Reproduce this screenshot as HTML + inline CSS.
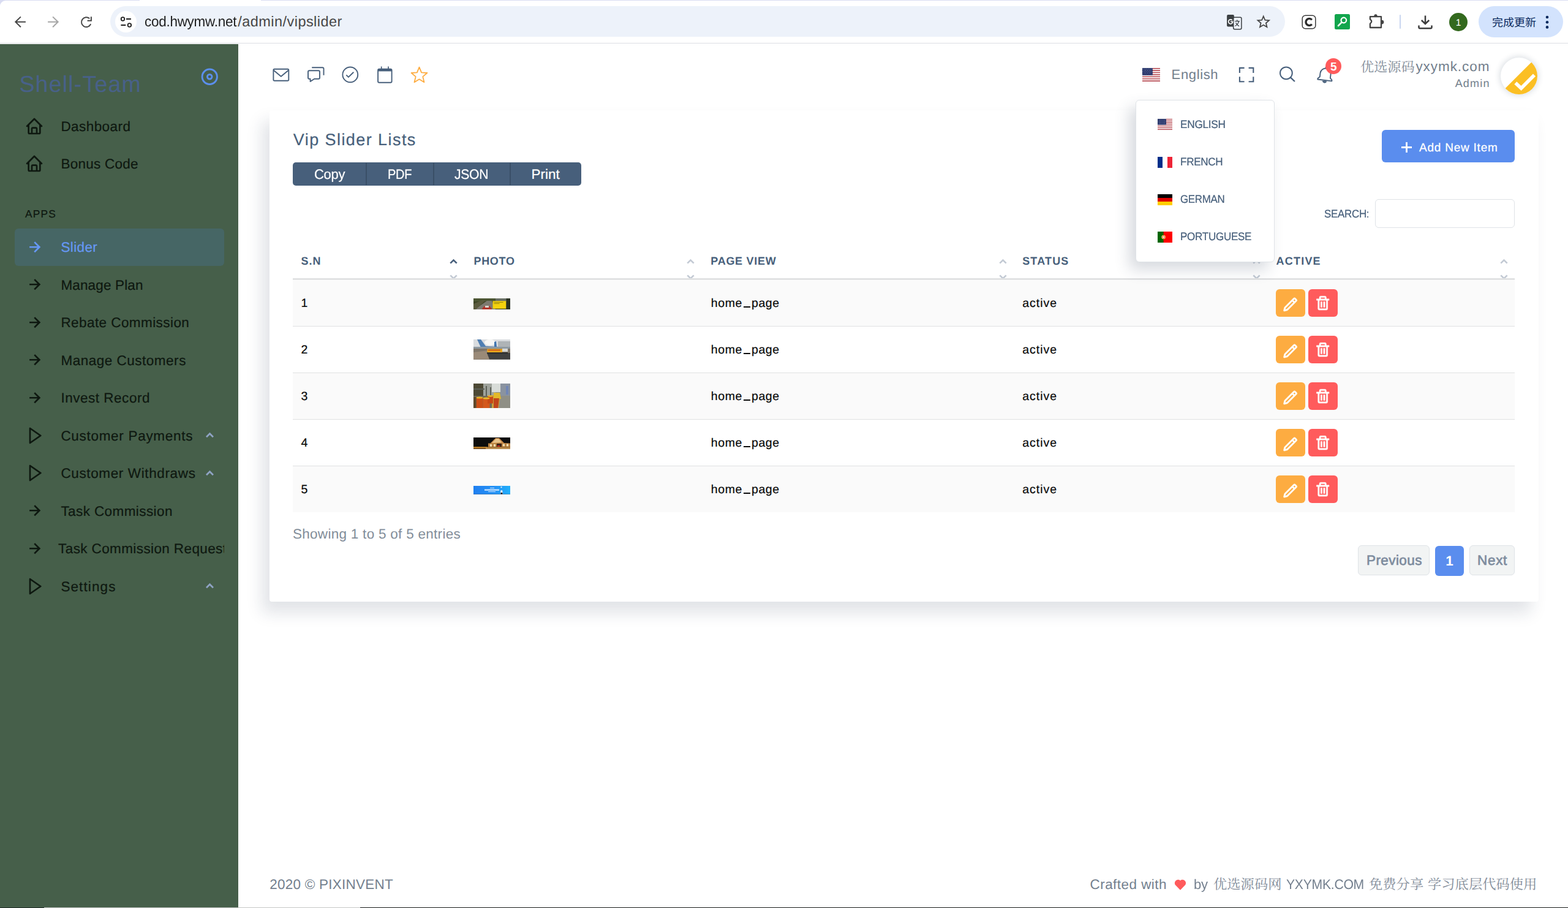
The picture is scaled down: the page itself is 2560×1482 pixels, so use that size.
<!DOCTYPE html>
<html lang="en"><head><meta charset="utf-8"><title>Vip Slider Lists</title>
<style>
html,body{margin:0;padding:0}
body{text-rendering:geometricPrecision;width:2560px;height:1482px;overflow:hidden;background:#fff;position:relative;font-family:"Liberation Sans",sans-serif}
#page div,#page svg,#page span{position:absolute}
#page{position:absolute;left:0;top:0;width:2560px;height:1482px;overflow:hidden}
#page>div{left:0;top:0}
.t{white-space:pre;line-height:1;transform-origin:0 50%;font-family:"Liberation Sans",sans-serif}
svg{display:block}
</style></head>
<body><div id="page">
<!-- browser chrome -->
<div id="chrome">
<div style="left:0px;top:0px;width:2560px;height:72px;background:#fff"></div>
<div style="left:0px;top:0px;width:228px;height:9px;background:#d9dcf2"></div>
<div style="left:0px;top:1px;width:229px;height:9px;background:#fff;border-radius:9px 0 0 0"></div>
<div style="left:426px;top:0px;width:2134px;height:1px;background:#d9dcf2"></div>
<div style="left:0px;top:70px;width:2560px;height:1px;background:#dcdee3"></div>
<svg style="left:16px;top:20px;" width="144" height="32" viewBox="16 20 144 32"><g style="fill:none;stroke:#474747;stroke-width:2"><path d="M41.9 35.8H25.3M33.9 27.4 25.3 35.8 33.9 44.2"/><path d="M78.1 35.8H94.7M86.1 27.4 94.7 35.8 86.1 44.2" stroke="#a6a6a6"/><path d="M146.2 30.3A7.9 7.9 0 1 0 148.2 39.2"/><path d="M148.9 27.2V33.7H142.6"/></g></svg>
<div style="left:180px;top:10px;width:1918px;height:50px;background:#edf2fa;border-radius:25px"></div>
<div style="left:187.5px;top:17.5px;width:35.5px;height:35.5px;background:#fff;border-radius:50%"></div>
<svg style="left:194px;top:24px;fill:none;stroke:#1f1f1f;stroke-width:1.8" width="24" height="24" viewBox="194 24 24 24"><circle cx="200.5" cy="31" r="2.8"/><path d="M206 31h7.9M197.4 41h7.9"/><circle cx="211.4" cy="41" r="2.8"/></svg>
<span class="t" style="left:236.3px;top:24px;font-size:23.5px;color:#1f1f1f;letter-spacing:-0.3px;transform:scaleX(0.958);">cod.hwymw.net</span>
<span class="t" style="left:388.3px;top:24px;font-size:23.5px;color:#474747;letter-spacing:0.45px;">/admin/vipslider</span>
<svg style="left:2000px;top:20px;" width="30" height="30" viewBox="2000 20 30 30"><rect x="2003.1" y="24" width="11.8" height="19.4" rx="1.9" fill="#3c4043"/><path d="M2012.5 43.3h5l-2.2 4.4z" fill="#3c4043"/><rect x="2013.7" y="28.3" width="13.2" height="19.4" rx="2.1" fill="#edf2fa" stroke="#3c4043" stroke-width="1.5"/><path d="M2011.7 33a3.5 3.5 0 1 0 .9 2.4h-3.5" fill="none" stroke="#fff" stroke-width="1.7"/><path d="M2016.2 34.7h7.6M2019.7 32.5v2.2M2022.7 34.9c-.9 3-3.1 5.7-6.2 7.6M2017.6 37c1.2 2.3 3 4.3 5.4 5.8" fill="none" stroke="#3c4043" stroke-width="1.3"/></svg>
<svg style="left:2049.3px;top:21.6px;fill:#474747;" width="27.5" height="27.5" viewBox="0 0 24 24"><path d="M22 9.24l-7.19-.62L12 2 9.19 8.63 2 9.24l5.46 4.73L5.82 21 12 17.27 18.18 21l-1.63-7.03L22 9.24zM12 15.4l-3.76 2.27 1-4.28-3.32-2.88 4.38-.38L12 6.1l1.71 4.04 4.38.38-3.32 2.88 1 4.28L12 15.4z"/></svg>
<svg style="left:2125px;top:23.5px;" width="24" height="24" viewBox="0 0 24 24"><rect x="1.2" y="1.2" width="21.6" height="21.6" rx="5" fill="#fff" stroke="#3b3b3b" stroke-width="1.5"/><path d="M16.8 8.3A5.6 5.6 0 1 0 16.8 15.7" fill="none" stroke="#2b2b2b" stroke-width="3.4"/></svg>
<svg style="left:2179px;top:23px;" width="25" height="25" viewBox="0 0 25 25"><rect width="25" height="25" rx="2.5" fill="#12a54d"/><circle cx="14.8" cy="10" r="4.3" fill="none" stroke="#fff" stroke-width="2.2"/><path d="M11.6 13.4 6 19" stroke="#fff" stroke-width="2.6" stroke-linecap="round"/></svg>
<svg style="left:2232px;top:20px;" width="30" height="30" viewBox="2232 20 30 30"><path d="M2236.9 27.2H2255V45H2236.9V38.6Q2241.6 35 2236.9 31.4Z" fill="none" stroke="#444" stroke-width="2.3" stroke-linejoin="round"/><path d="M2243.3 26.3a2.7 3.2 0 0 1 5.4 0zM2256 32.7a3.4 3.4 0 0 1 0 6.8z" fill="#444"/></svg>
<div style="left:2285px;top:24px;width:2px;height:23px;background:#c9d6f0;border-radius:1px"></div>
<svg style="left:2313px;top:22px;" width="28" height="28" viewBox="0 0 28 28"><path d="M14 3.5v13M7.8 11l6.2 6 6.2-6M3.5 19.5v3.3a1.5 1.5 0 0 0 1.5 1.5h18a1.5 1.5 0 0 0 1.5-1.5v-3.3" fill="none" stroke="#3c3c3c" stroke-width="2.5"/></svg>
<div style="left:2366px;top:21px;width:30px;height:30px;background:#33691e;border-radius:50%"></div>
<span class="t" style="left:2376.7px;top:30px;font-size:15.5px;color:#fff;">1</span>
<div style="left:2413.5px;top:10px;width:138.5px;height:50.5px;background:#d3e3fd;border-radius:25.5px"></div>
<svg style="left:2435.7px;top:25.2px;fill:#0a2a5e;overflow:visible" width="74" height="25" viewBox="0 -18 74 25"><text x="0" y="0" font-size="18" font-family="'Liberation Sans','Noto Sans CJK SC',sans-serif" fill="#0a2a5e">完成更新</text></svg>
<svg style="left:2522px;top:24px;fill:#0a2a5e" width="8" height="24" viewBox="0 0 8 24"><circle cx="4" cy="4" r="2.3"/><circle cx="4" cy="12.2" r="2.3"/><circle cx="4" cy="20.4" r="2.3"/></svg>
</div>
<!-- sidebar -->
<div id="sidebar">
<div style="left:0px;top:72px;width:389px;height:1410px;background:#465f4a"></div>
<span class="t" style="left:31.4px;top:119px;font-size:37.5px;color:#486189;letter-spacing:1.21px;">Shell-Team</span>
<svg style="left:327.5px;top:110.7px;fill:none;stroke:#5b8fec;stroke-width:2.9" width="28.5" height="28.5" viewBox="0 0 28.5 28.5"><circle cx="14.25" cy="14.25" r="12.2" /><circle cx="14.25" cy="14.25" r="3.8"/></svg>
<svg style="left:40.2px;top:190px;fill:#0e1810;" width="32" height="32" viewBox="0 0 24 24"><path d="M3 13h1v7c0 1.103.897 2 2 2h12c1.103 0 2-.897 2-2v-7h1a1 1 0 0 0 .707-1.707l-9-9a.999.999 0 0 0-1.414 0l-9 9A1 1 0 0 0 3 13zm7 7v-5h4v5h-4zm2-15.586 6 6V15l.001 5H16v-5c0-1.103-.897-2-2-2h-4c-1.103 0-2 .897-2 2v5H6v-9.586l6-6z"/></svg><span class="t" style="left:99.4px;top:196px;font-size:22.5px;color:#0e1810;letter-spacing:0.43px;-webkit-text-stroke:.22px;">Dashboard</span>
<svg style="left:40.2px;top:251px;fill:#0e1810;" width="32" height="32" viewBox="0 0 24 24"><path d="M3 13h1v7c0 1.103.897 2 2 2h12c1.103 0 2-.897 2-2v-7h1a1 1 0 0 0 .707-1.707l-9-9a.999.999 0 0 0-1.414 0l-9 9A1 1 0 0 0 3 13zm7 7v-5h4v5h-4zm2-15.586 6 6V15l.001 5H16v-5c0-1.103-.897-2-2-2h-4c-1.103 0-2 .897-2 2v5H6v-9.586l6-6z"/></svg><span class="t" style="left:99.4px;top:257px;font-size:22.5px;color:#0e1810;letter-spacing:0.26px;-webkit-text-stroke:.22px;">Bonus Code</span>
<span class="t" style="left:41px;top:341px;font-size:17.3px;color:#0e1810;letter-spacing:1.23px;-webkit-text-stroke:.22px;">APPS</span>
<div style="left:24px;top:373px;width:342px;height:61px;background:#466665;border-radius:6px"></div><svg style="left:40.2px;top:386.9px;fill:#6698f5;" width="32.5" height="32.5" viewBox="0 0 24 24"><path d="m11.293 17.293 1.414 1.414L19.414 12l-6.707-6.707-1.414 1.414L15.586 11H6v2h9.586z"/></svg><span class="t" style="left:99.4px;top:393px;font-size:22.5px;color:#6698f5;letter-spacing:0.39px;-webkit-text-stroke:.22px;">Slider</span>
<svg style="left:40.2px;top:448.4px;fill:#0e1810;" width="32.5" height="32.5" viewBox="0 0 24 24"><path d="m11.293 17.293 1.414 1.414L19.414 12l-6.707-6.707-1.414 1.414L15.586 11H6v2h9.586z"/></svg><span class="t" style="left:99.4px;top:455px;font-size:22.5px;color:#0e1810;letter-spacing:0.15px;-webkit-text-stroke:.22px;">Manage Plan</span>
<svg style="left:40.2px;top:509.90000000000003px;fill:#0e1810;" width="32.5" height="32.5" viewBox="0 0 24 24"><path d="m11.293 17.293 1.414 1.414L19.414 12l-6.707-6.707-1.414 1.414L15.586 11H6v2h9.586z"/></svg><span class="t" style="left:99.4px;top:516px;font-size:22.5px;color:#0e1810;letter-spacing:0.43px;-webkit-text-stroke:.22px;">Rebate Commission</span>
<svg style="left:40.2px;top:571.4000000000001px;fill:#0e1810;" width="32.5" height="32.5" viewBox="0 0 24 24"><path d="m11.293 17.293 1.414 1.414L19.414 12l-6.707-6.707-1.414 1.414L15.586 11H6v2h9.586z"/></svg><span class="t" style="left:99.4px;top:578px;font-size:22.5px;color:#0e1810;letter-spacing:0.51px;-webkit-text-stroke:.22px;">Manage Customers</span>
<svg style="left:40.2px;top:632.9000000000001px;fill:#0e1810;" width="32.5" height="32.5" viewBox="0 0 24 24"><path d="m11.293 17.293 1.414 1.414L19.414 12l-6.707-6.707-1.414 1.414L15.586 11H6v2h9.586z"/></svg><span class="t" style="left:99.4px;top:639px;font-size:22.5px;color:#0e1810;letter-spacing:0.52px;-webkit-text-stroke:.22px;">Invest Record</span>
<svg style="left:40.6px;top:694.9000000000001px;fill:#0e1810;" width="32" height="32" viewBox="0 0 24 24"><path d="M5.536 21.886a1.004 1.004 0 0 0 1.033-.064l13-9a1 1 0 0 0 0-1.644l-13-9A1 1 0 0 0 5 3v18a1 1 0 0 0 .536.886zM7 4.909 17.243 12 7 19.091V4.909z"/></svg><span class="t" style="left:99.4px;top:701px;font-size:22.5px;color:#0e1810;letter-spacing:0.7px;-webkit-text-stroke:.22px;">Customer Payments</span><svg style="left:334.8px;top:705.2px;" width="15" height="10" viewBox="0 0 15 10"><path d="M2 8.3 7.5 2.8 13 8.3" fill="none" stroke="#8fa3c4" stroke-width="2.8"/></svg>
<svg style="left:40.6px;top:756.4000000000001px;fill:#0e1810;" width="32" height="32" viewBox="0 0 24 24"><path d="M5.536 21.886a1.004 1.004 0 0 0 1.033-.064l13-9a1 1 0 0 0 0-1.644l-13-9A1 1 0 0 0 5 3v18a1 1 0 0 0 .536.886zM7 4.909 17.243 12 7 19.091V4.909z"/></svg><span class="t" style="left:99.4px;top:762px;font-size:22.5px;color:#0e1810;letter-spacing:0.63px;-webkit-text-stroke:.22px;">Customer Withdraws</span><svg style="left:334.8px;top:766.7px;" width="15" height="10" viewBox="0 0 15 10"><path d="M2 8.3 7.5 2.8 13 8.3" fill="none" stroke="#8fa3c4" stroke-width="2.8"/></svg>
<svg style="left:40.2px;top:817.4000000000001px;fill:#0e1810;" width="32.5" height="32.5" viewBox="0 0 24 24"><path d="m11.293 17.293 1.414 1.414L19.414 12l-6.707-6.707-1.414 1.414L15.586 11H6v2h9.586z"/></svg><span class="t" style="left:99.4px;top:824px;font-size:22.5px;color:#0e1810;letter-spacing:0.41px;-webkit-text-stroke:.22px;">Task Commission</span>
<div style="left:0;top:865px;width:366px;height:61px;overflow:hidden"><svg style="left:40.2px;top:13.899999999999999px;fill:#0e1810;" width="32.5" height="32.5" viewBox="0 0 24 24"><path d="m11.293 17.293 1.414 1.414L19.414 12l-6.707-6.707-1.414 1.414L15.586 11H6v2h9.586z"/></svg><span class="t" style="left:95.1px;top:20px;font-size:22.5px;color:#0e1810;letter-spacing:0.39px;-webkit-text-stroke:.22px;">Task Commission Request</span></div>
<svg style="left:40.6px;top:940.9000000000001px;fill:#0e1810;" width="32" height="32" viewBox="0 0 24 24"><path d="M5.536 21.886a1.004 1.004 0 0 0 1.033-.064l13-9a1 1 0 0 0 0-1.644l-13-9A1 1 0 0 0 5 3v18a1 1 0 0 0 .536.886zM7 4.909 17.243 12 7 19.091V4.909z"/></svg><span class="t" style="left:99.4px;top:947px;font-size:22.5px;color:#0e1810;letter-spacing:1.1px;-webkit-text-stroke:.22px;">Settings</span><svg style="left:334.8px;top:951.2px;" width="15" height="10" viewBox="0 0 15 10"><path d="M2 8.3 7.5 2.8 13 8.3" fill="none" stroke="#8fa3c4" stroke-width="2.8"/></svg>
</div>
<!-- top navbar -->
<div id="navbar">
<svg style="left:440px;top:104px;" width="264" height="36" viewBox="440 104 264 36"><g style="fill:none;stroke:#475f7b;stroke-width:1.9;stroke-linejoin:round"><rect x="446.4" y="112.8" width="24.9" height="18.9" rx="1.8"/><path d="M446.8 114.7 458.8 124.8 470.9 114.7"/><path d="M505 115.2h15a2 2 0 0 1 2 2v9.6a2 2 0 0 1-2 2h-6.8l-6.6 4.2v-4.2h-1.6a2 2 0 0 1-2-2v-9.6a2 2 0 0 1 2-2z"/><path d="M509.2 110.2h17.3a2 2 0 0 1 2 2v10.6"/><circle cx="571.8" cy="121.9" r="12.4"/><path d="M565.3 122.3 568.9 125.9 577.3 117.7"/><path d="M617.1 114.6a2 2 0 0 1 2-2h18.5a2 2 0 0 1 2 2v18.1a2 2 0 0 1-2 2h-18.5a2 2 0 0 1-2-2z"/><path d="M617.1 113h22.5v3.4h-22.5z" fill="#475f7b" stroke="none"/><path d="M622.7 108.4v4.4M634 108.4v4.4" stroke-width="1.7"/></g><path d="M684.5 109.6L688.1 118.3L697.4 119L690.3 125.1L692.5 134.2L684.5 129.3L676.5 134.2L678.7 125.1L671.6 119L680.9 118.3Z" style="fill:none;stroke:#fdac41;stroke-width:1.8;stroke-linejoin:round"/></svg>
<svg style="left:1865px;top:111px;" width="29" height="22" viewBox="0 0 29 22"><rect y="0" width="29" height="1.74" fill="#b4434c"/><rect y="1.69" width="29" height="1.74" fill="#fff"/><rect y="3.38" width="29" height="1.74" fill="#b4434c"/><rect y="5.08" width="29" height="1.74" fill="#fff"/><rect y="6.77" width="29" height="1.74" fill="#b4434c"/><rect y="8.46" width="29" height="1.74" fill="#fff"/><rect y="10.15" width="29" height="1.74" fill="#b4434c"/><rect y="11.85" width="29" height="1.74" fill="#fff"/><rect y="13.54" width="29" height="1.74" fill="#b4434c"/><rect y="15.23" width="29" height="1.74" fill="#fff"/><rect y="16.92" width="29" height="1.74" fill="#b4434c"/><rect y="18.62" width="29" height="1.74" fill="#fff"/><rect y="20.31" width="29" height="1.74" fill="#b4434c"/><rect width="16.8" height="11.85" fill="#1f2c60"/><g fill="#8e9bc8"><circle cx="1.45" cy="1.52" r="0.66"/><circle cx="4.23" cy="1.52" r="0.66"/><circle cx="7.02" cy="1.52" r="0.66"/><circle cx="9.8" cy="1.52" r="0.66"/><circle cx="12.59" cy="1.52" r="0.66"/><circle cx="15.37" cy="1.52" r="0.66"/><circle cx="2.84" cy="3.72" r="0.66"/><circle cx="5.63" cy="3.72" r="0.66"/><circle cx="8.41" cy="3.72" r="0.66"/><circle cx="11.19" cy="3.72" r="0.66"/><circle cx="13.98" cy="3.72" r="0.66"/><circle cx="1.45" cy="5.92" r="0.66"/><circle cx="4.23" cy="5.92" r="0.66"/><circle cx="7.02" cy="5.92" r="0.66"/><circle cx="9.8" cy="5.92" r="0.66"/><circle cx="12.59" cy="5.92" r="0.66"/><circle cx="15.37" cy="5.92" r="0.66"/><circle cx="2.84" cy="8.12" r="0.66"/><circle cx="5.63" cy="8.12" r="0.66"/><circle cx="8.41" cy="8.12" r="0.66"/><circle cx="11.19" cy="8.12" r="0.66"/><circle cx="13.98" cy="8.12" r="0.66"/><circle cx="1.45" cy="10.32" r="0.66"/><circle cx="4.23" cy="10.32" r="0.66"/><circle cx="7.02" cy="10.32" r="0.66"/><circle cx="9.8" cy="10.32" r="0.66"/><circle cx="12.59" cy="10.32" r="0.66"/><circle cx="15.37" cy="10.32" r="0.66"/></g></svg>
<span class="t" style="left:1912.6px;top:111px;font-size:22px;color:#727e8c;letter-spacing:0.64px;">English</span>
<svg style="left:2016px;top:104px;" width="170" height="36" viewBox="2016 104 170 36"><g style="fill:none;stroke:#475f7b;stroke-width:2.1"><path d="M2023.9 119V110.9H2031.6M2038.6 110.9H2046.3V119M2046.3 125.2V133.3H2038.6M2031.6 133.3H2023.9V125.2"/><circle cx="2099.9" cy="119.3" r="9.9" stroke-width="2"/><path d="M2106.9 126.3 2113.9 133" stroke-width="2.3"/></g><g transform="rotate(7 2164 121)" style="fill:none;stroke:#475f7b;stroke-width:1.9;stroke-linejoin:round"><path d="M2152.4 131v-1.6l3-3v-6.2a8.6 8.6 0 0 1 17.2 0v6.2l3 3v1.6z"/><circle cx="2164" cy="110.7" r="1" fill="#475f7b"/><path d="M2160.6 132.6a3.5 3.5 0 0 0 6.8 0z" fill="#475f7b" stroke-width=".8"/></g></svg>
<div style="left:2163.8px;top:94.5px;width:26.4px;height:26.4px;background:#ff5b5c;border-radius:50%"></div>
<span class="t" style="left:2172.1px;top:100px;font-size:19px;color:#fff;font-weight:700;">5</span>
<svg style="left:2221.4px;top:94.6px;fill:#838d99;overflow:visible" width="91" height="31" viewBox="0 -22.2 91 31"><text x="0" y="0" font-size="22.2" font-family="'Liberation Serif','Noto Serif CJK SC',serif" fill="#838d99">优选源码</text></svg>
<span class="t" style="left:2311.4px;top:98px;font-size:22.5px;color:#727e8c;letter-spacing:0.94px;">yxymk.com</span>
<span class="t" style="left:2375.7px;top:127px;font-size:18px;color:#727e8c;letter-spacing:1.17px;">Admin</span>
<div style="left:2450px;top:94.3px;width:60px;height:60px;border-radius:50%;background:#fff;box-shadow:0 0 10px 2px rgba(40,60,90,.16);overflow:hidden"><svg width="60" height="60" viewBox="2450 94.3 60 60" style="left:0;top:0"><path d="M2520 82.1 2440 162.1 2520 170z" fill="#fbbf24"/><path d="M2474.3 135.7 2483.6 144.4 2505 122.9" fill="none" stroke="#fff" stroke-width="5.7"/></svg></div>
</div>
<!-- card -->
<div id="card">
<div style="left:440px;top:180px;width:2072px;height:802px;background:#fff;border-radius:4px;box-shadow:-12px 18px 27px 0 rgba(25,42,70,.13)"></div>
<span class="t" style="left:478.8px;top:215px;font-size:27px;color:#475f7b;letter-spacing:1.43px;-webkit-text-stroke:.22px;">Vip Slider Lists</span>
<div style="left:478px;top:265px;width:471px;height:38px;background:#475f7b;border-radius:5px"></div>
<div style="left:597px;top:266px;width:1.5px;height:36px;background:#3a4f67"></div>
<div style="left:707px;top:266px;width:1.5px;height:36px;background:#3a4f67"></div>
<div style="left:832px;top:266px;width:1.5px;height:36px;background:#3a4f67"></div>
<span class="t" style="left:512.5px;top:274px;font-size:22.5px;color:#fff;letter-spacing:-0.3px;transform:scaleX(0.978);-webkit-text-stroke:.22px;">Copy</span>
<span class="t" style="left:633px;top:274px;font-size:22.5px;color:#fff;letter-spacing:-0.3px;transform:scaleX(0.89);-webkit-text-stroke:.22px;">PDF</span>
<span class="t" style="left:742px;top:274px;font-size:22.5px;color:#fff;letter-spacing:-0.3px;transform:scaleX(0.939);-webkit-text-stroke:.22px;">JSON</span>
<span class="t" style="left:867.5px;top:274px;font-size:22.5px;color:#fff;letter-spacing:-0.02px;-webkit-text-stroke:.22px;">Print</span>
<div style="left:2256px;top:212px;width:217px;height:53px;background:#5a8dee;border-radius:6px"></div>
<svg style="left:2288px;top:232px;" width="17" height="17" viewBox="0 0 17 17"><path d="M8.5 0v17M0 8.5h17" stroke="#fff" stroke-width="2.8" fill="none"/></svg>
<span class="t" style="left:2317px;top:232px;font-size:19px;color:#fff;letter-spacing:0.77px;-webkit-text-stroke:.25px #fff;">Add New Item</span>
<span class="t" style="left:2161.5px;top:340px;font-size:18px;color:#475f7b;letter-spacing:-0.3px;transform:scaleX(0.94);-webkit-text-stroke:.22px;">SEARCH:</span>
<div style="left:2245px;top:325px;width:228px;height:47px;border:1px solid #dfe3e7;border-radius:6px;box-sizing:border-box;background:#fff"></div>
<span class="t" style="left:491.4px;top:417px;font-size:18px;color:#475f7b;letter-spacing:0.99px;font-weight:700;">S.N</span>
<svg style="left:734.3px;top:421.8px;" width="13" height="9" viewBox="0 0 13 9"><path d="M1.3 7.7 6.5 2.5 11.7 7.7" fill="none" stroke="#475f7b" stroke-width="2.6"/></svg>
<svg style="left:734.3px;top:447.8px;" width="13" height="9" viewBox="0 0 13 9"><path d="M1.3 1.3 6.5 6.5 11.7 1.3" fill="none" stroke="#c3cad4" stroke-width="2.6"/></svg>
<span class="t" style="left:773.4px;top:417px;font-size:18px;color:#475f7b;letter-spacing:0.73px;font-weight:700;">PHOTO</span>
<svg style="left:1121.4px;top:421.8px;" width="13" height="9" viewBox="0 0 13 9"><path d="M1.3 7.7 6.5 2.5 11.7 7.7" fill="none" stroke="#c3cad4" stroke-width="2.6"/></svg>
<svg style="left:1121.4px;top:447.8px;" width="13" height="9" viewBox="0 0 13 9"><path d="M1.3 1.3 6.5 6.5 11.7 1.3" fill="none" stroke="#c3cad4" stroke-width="2.6"/></svg>
<span class="t" style="left:1160.3px;top:417px;font-size:18px;color:#475f7b;letter-spacing:0.71px;font-weight:700;">PAGE VIEW</span>
<svg style="left:1630.8px;top:421.8px;" width="13" height="9" viewBox="0 0 13 9"><path d="M1.3 7.7 6.5 2.5 11.7 7.7" fill="none" stroke="#c3cad4" stroke-width="2.6"/></svg>
<svg style="left:1630.8px;top:447.8px;" width="13" height="9" viewBox="0 0 13 9"><path d="M1.3 1.3 6.5 6.5 11.7 1.3" fill="none" stroke="#c3cad4" stroke-width="2.6"/></svg>
<span class="t" style="left:1669.2px;top:417px;font-size:18px;color:#475f7b;letter-spacing:1.17px;font-weight:700;">STATUS</span>
<svg style="left:2044.6px;top:421.8px;" width="13" height="9" viewBox="0 0 13 9"><path d="M1.3 7.7 6.5 2.5 11.7 7.7" fill="none" stroke="#c3cad4" stroke-width="2.6"/></svg>
<svg style="left:2044.6px;top:447.8px;" width="13" height="9" viewBox="0 0 13 9"><path d="M1.3 1.3 6.5 6.5 11.7 1.3" fill="none" stroke="#c3cad4" stroke-width="2.6"/></svg>
<span class="t" style="left:2083.6px;top:417px;font-size:18px;color:#475f7b;letter-spacing:1.2px;font-weight:700;">ACTIVE</span>
<svg style="left:2448.7px;top:421.8px;" width="13" height="9" viewBox="0 0 13 9"><path d="M1.3 7.7 6.5 2.5 11.7 7.7" fill="none" stroke="#c3cad4" stroke-width="2.6"/></svg>
<svg style="left:2448.7px;top:447.8px;" width="13" height="9" viewBox="0 0 13 9"><path d="M1.3 1.3 6.5 6.5 11.7 1.3" fill="none" stroke="#c3cad4" stroke-width="2.6"/></svg>
<div style="left:478px;top:454px;width:1995px;height:3px;background:#e1e2e3"></div>
<div style="left:478px;top:458px;width:1995px;height:74px;background:#fafafa"></div>
<div style="left:478px;top:532px;width:1995px;height:1px;background:#e0e1e2"></div>
<span class="t" style="left:491.4px;top:486px;font-size:19.5px;color:#0a0a0a;-webkit-text-stroke:.22px;">1</span>
<svg style="left:773px;top:487px" width="60" height="18" viewBox="0 0 60 18" preserveAspectRatio="none"><filter id="bl0" x="-20%" y="-20%" width="140%" height="140%"><feGaussianBlur stdDeviation=".55"/></filter><g filter="url(#bl0)"><rect x="-6" y="-6" width="72" height="30" fill="#555"/><rect width="60" height="18" fill="#3d4426"/><path d="M0 0h60v5H0z" fill="#4c5533"/><path d="M36 0h24v6H36z" fill="#6b7064"/><path d="M2 18 22 4h8l6 14z" fill="#7d7a70"/><path d="M0 9 14 3h6L4 18H0z" fill="#5a5a3c"/><path d="M14 18c1-4 4-6 8-6s7 2 8 6z" fill="#b0352a"/><path d="M19 12h6v3h-6z" fill="#d8d4cc"/><rect x="31.5" y="4.3" width="22" height="12.5" fill="#f4d20c"/><path d="M33.5 6.5h15M33.5 8.5h9" stroke="#8a7a10" stroke-width=".9"/><rect x="53.5" width="6.5" height="18" fill="#2c3320"/></g></svg>
<span class="t" style="left:1160.7px;top:486px;font-size:19.5px;color:#0a0a0a;letter-spacing:0.64px;-webkit-text-stroke:.22px;">home</span>
<div style="left:1213.6px;top:500.3px;width:11.4px;height:1.6px;background:#0a0a0a"></div>
<span class="t" style="left:1227.1px;top:486px;font-size:19.5px;color:#0a0a0a;letter-spacing:0.54px;-webkit-text-stroke:.22px;">page</span>
<span class="t" style="left:1669.2px;top:486px;font-size:19.5px;color:#0a0a0a;letter-spacing:1.01px;-webkit-text-stroke:.22px;">active</span>
<div style="left:2083px;top:472px;width:48px;height:45px;background:#fdac41;border-radius:6px"></div>
<svg style="left:2092.3px;top:483px;fill:#fff;stroke:#fff;stroke-width:0.45;" width="28.6" height="28.6" viewBox="0 0 24 24"><path d="M4 21a1 1 0 0 0 .24 0l4-1a1 1 0 0 0 .47-.26L21 7.41a2 2 0 0 0 0-2.82L19.42 3a2 2 0 0 0-2.83 0L4.3 15.29a1.06 1.06 0 0 0-.27.47l-1 4A1 1 0 0 0 3.76 21 1 1 0 0 0 4 21zM18 4.41 19.59 6 18 7.59 16.42 6zM5.91 16.51 15 7.41 16.59 9l-9.1 9.1-2.11.52z"/></svg>
<div style="left:2136px;top:472px;width:48px;height:45px;background:#ff5b5c;border-radius:6px"></div>
<svg style="left:2146.1px;top:480.9px;fill:#fff;stroke:#fff;stroke-width:0.45;" width="27.4" height="27.4" viewBox="0 0 24 24"><path d="M5 20a2 2 0 0 0 2 2h10a2 2 0 0 0 2-2V8h2V6h-4V4a2 2 0 0 0-2-2H9a2 2 0 0 0-2 2v2H3v2h2zM9 4h6v2H9zM8 8h9v12H7V8z"/><path d="M9 10h2v8H9zm4 0h2v8h-2z"/></svg>
<div style="left:478px;top:608px;width:1995px;height:1px;background:#e0e1e2"></div>
<span class="t" style="left:491.4px;top:562px;font-size:19.5px;color:#0a0a0a;-webkit-text-stroke:.22px;">2</span>
<svg style="left:773px;top:554px" width="60" height="32.5" viewBox="0 0 60 32.5" preserveAspectRatio="none"><filter id="bl1" x="-20%" y="-20%" width="140%" height="140%"><feGaussianBlur stdDeviation=".55"/></filter><g filter="url(#bl1)"><rect x="-6" y="-6" width="72" height="44.5" fill="#555"/><rect width="60" height="32.5" fill="#b9bcc0"/><rect width="60" height="13" fill="#d9dcdf"/><ellipse cx="27" cy="5" rx="9" ry="5" fill="#f6f6f4"/><path d="M6 0h6l8 11 24 1v3L12 13z" fill="#4f7fb3"/><path d="M34 4l3-1 1 9h-4z" fill="#3f74b0"/><path d="M0 12h60v4H0z" fill="#8f9aa2"/><path d="M40 3h20v9H40z" fill="#aeb3b6"/><path d="M0 15h60v17.5H0z" fill="#7f766b"/><path d="M0 21 24 18l8 14.5H0z" fill="#9a8a78"/><path d="M22 22h38v10.5H26z" fill="#3f4140"/><rect x="22.5" y="15.5" width="24.5" height="5.8" fill="#e9a51e"/><path d="M24 17.5h20" stroke="#c8401c" stroke-width="1.2"/><rect x="47" y="15" width="9" height="5" fill="#d6d8d6"/><path d="M22 21.3h34v2H22z" fill="#2a2b2a"/></g></svg>
<span class="t" style="left:1160.7px;top:562px;font-size:19.5px;color:#0a0a0a;letter-spacing:0.64px;-webkit-text-stroke:.22px;">home</span>
<div style="left:1213.6px;top:576.3px;width:11.4px;height:1.6px;background:#0a0a0a"></div>
<span class="t" style="left:1227.1px;top:562px;font-size:19.5px;color:#0a0a0a;letter-spacing:0.54px;-webkit-text-stroke:.22px;">page</span>
<span class="t" style="left:1669.2px;top:562px;font-size:19.5px;color:#0a0a0a;letter-spacing:1.01px;-webkit-text-stroke:.22px;">active</span>
<div style="left:2083px;top:548px;width:48px;height:45px;background:#fdac41;border-radius:6px"></div>
<svg style="left:2092.3px;top:559px;fill:#fff;stroke:#fff;stroke-width:0.45;" width="28.6" height="28.6" viewBox="0 0 24 24"><path d="M4 21a1 1 0 0 0 .24 0l4-1a1 1 0 0 0 .47-.26L21 7.41a2 2 0 0 0 0-2.82L19.42 3a2 2 0 0 0-2.83 0L4.3 15.29a1.06 1.06 0 0 0-.27.47l-1 4A1 1 0 0 0 3.76 21 1 1 0 0 0 4 21zM18 4.41 19.59 6 18 7.59 16.42 6zM5.91 16.51 15 7.41 16.59 9l-9.1 9.1-2.11.52z"/></svg>
<div style="left:2136px;top:548px;width:48px;height:45px;background:#ff5b5c;border-radius:6px"></div>
<svg style="left:2146.1px;top:556.9px;fill:#fff;stroke:#fff;stroke-width:0.45;" width="27.4" height="27.4" viewBox="0 0 24 24"><path d="M5 20a2 2 0 0 0 2 2h10a2 2 0 0 0 2-2V8h2V6h-4V4a2 2 0 0 0-2-2H9a2 2 0 0 0-2 2v2H3v2h2zM9 4h6v2H9zM8 8h9v12H7V8z"/><path d="M9 10h2v8H9zm4 0h2v8h-2z"/></svg>
<div style="left:478px;top:609px;width:1995px;height:75px;background:#fafafa"></div>
<div style="left:478px;top:684px;width:1995px;height:1px;background:#e0e1e2"></div>
<span class="t" style="left:491.4px;top:638px;font-size:19.5px;color:#0a0a0a;-webkit-text-stroke:.22px;">3</span>
<svg style="left:773px;top:626px" width="60" height="40" viewBox="0 0 60 40" preserveAspectRatio="none"><filter id="bl2" x="-20%" y="-20%" width="140%" height="140%"><feGaussianBlur stdDeviation=".55"/></filter><g filter="url(#bl2)"><rect x="-6" y="-6" width="72" height="52" fill="#555"/><rect width="60" height="40" fill="#8d8f88"/><rect width="18" height="22" fill="#4d4a36"/><rect x="16" width="20" height="20" fill="#9fa39c"/><rect x="30" width="16" height="14" fill="#d8dcd8"/><rect x="44" width="16" height="22" fill="#8a93a0"/><path d="M20 4h2v16h-2zM27 6h2v14h-2zM0 8h18v2H0z" fill="#5c6058"/><path d="M53 4h4v14h-4z" fill="#6f86b5"/><rect y="20" width="60" height="20" fill="#6f6a58"/><path d="M36 20h24v20H40z" fill="#8f8f86"/><path d="M30 19h14l-3 21H30z" fill="#c9a23a"/><path d="M33 15h10l2 10H33z" fill="#e3b92c"/><path d="M33 24h9l-2 16h-7z" fill="#c0451c"/><rect x="4.5" y="23" width="11" height="17" fill="#cc4f17"/><rect x="15.5" y="24" width="11" height="16" fill="#d4581a"/><rect x="23" y="20.5" width="9" height="12" fill="#c84a18"/><ellipse cx="10" cy="23" rx="5.5" ry="1.6" fill="#e5b428"/><ellipse cx="21" cy="24" rx="5.5" ry="1.6" fill="#e8ba2c"/><ellipse cx="27.5" cy="20.5" rx="4.5" ry="1.4" fill="#e2b02a"/><path d="M0 22h4.5v18H0z" fill="#5e4a2c"/></g></svg>
<span class="t" style="left:1160.7px;top:638px;font-size:19.5px;color:#0a0a0a;letter-spacing:0.64px;-webkit-text-stroke:.22px;">home</span>
<div style="left:1213.6px;top:652.3px;width:11.4px;height:1.6px;background:#0a0a0a"></div>
<span class="t" style="left:1227.1px;top:638px;font-size:19.5px;color:#0a0a0a;letter-spacing:0.54px;-webkit-text-stroke:.22px;">page</span>
<span class="t" style="left:1669.2px;top:638px;font-size:19.5px;color:#0a0a0a;letter-spacing:1.01px;-webkit-text-stroke:.22px;">active</span>
<div style="left:2083px;top:624px;width:48px;height:45px;background:#fdac41;border-radius:6px"></div>
<svg style="left:2092.3px;top:635px;fill:#fff;stroke:#fff;stroke-width:0.45;" width="28.6" height="28.6" viewBox="0 0 24 24"><path d="M4 21a1 1 0 0 0 .24 0l4-1a1 1 0 0 0 .47-.26L21 7.41a2 2 0 0 0 0-2.82L19.42 3a2 2 0 0 0-2.83 0L4.3 15.29a1.06 1.06 0 0 0-.27.47l-1 4A1 1 0 0 0 3.76 21 1 1 0 0 0 4 21zM18 4.41 19.59 6 18 7.59 16.42 6zM5.91 16.51 15 7.41 16.59 9l-9.1 9.1-2.11.52z"/></svg>
<div style="left:2136px;top:624px;width:48px;height:45px;background:#ff5b5c;border-radius:6px"></div>
<svg style="left:2146.1px;top:632.9px;fill:#fff;stroke:#fff;stroke-width:0.45;" width="27.4" height="27.4" viewBox="0 0 24 24"><path d="M5 20a2 2 0 0 0 2 2h10a2 2 0 0 0 2-2V8h2V6h-4V4a2 2 0 0 0-2-2H9a2 2 0 0 0-2 2v2H3v2h2zM9 4h6v2H9zM8 8h9v12H7V8z"/><path d="M9 10h2v8H9zm4 0h2v8h-2z"/></svg>
<div style="left:478px;top:760px;width:1995px;height:1px;background:#e0e1e2"></div>
<span class="t" style="left:491.4px;top:714px;font-size:19.5px;color:#0a0a0a;-webkit-text-stroke:.22px;">4</span>
<svg style="left:773px;top:714px" width="60" height="18.7" viewBox="0 0 60 18.7" preserveAspectRatio="none"><filter id="bl3" x="-20%" y="-20%" width="140%" height="140%"><feGaussianBlur stdDeviation=".55"/></filter><g filter="url(#bl3)"><rect x="-6" y="-6" width="72" height="30.7" fill="#555"/><rect width="60" height="18.7" fill="#0c0b10"/><path d="M24 13 36 1h6l8 8 10 1v6H24z" fill="#c98a48"/><path d="M30 9 37 2h4l5 6z" fill="#e8c48a"/><path d="M24 9.5h36v6H24z" fill="#b7813f"/><path d="M27 11h3v4h-3zM33 11h3v4h-3zM48 10.5h3v4h-3zM54 10.5h3v4h-3z" fill="#f0dcae"/><path d="M38 10h8v5h-8z" fill="#3a2414"/><rect x="39" y="13" width="4" height="2" fill="#c0281c"/><path d="M50 0h10v9H50z" fill="#0c0b10"/><path d="M0 15.2h60v3.5H0z" fill="#8a5a20"/><path d="M0 15.6h22v1.2H0z" fill="#e09a30"/><path d="M20 16.5h40v2.2H20z" fill="#c79a58"/></g></svg>
<span class="t" style="left:1160.7px;top:714px;font-size:19.5px;color:#0a0a0a;letter-spacing:0.64px;-webkit-text-stroke:.22px;">home</span>
<div style="left:1213.6px;top:728.3px;width:11.4px;height:1.6px;background:#0a0a0a"></div>
<span class="t" style="left:1227.1px;top:714px;font-size:19.5px;color:#0a0a0a;letter-spacing:0.54px;-webkit-text-stroke:.22px;">page</span>
<span class="t" style="left:1669.2px;top:714px;font-size:19.5px;color:#0a0a0a;letter-spacing:1.01px;-webkit-text-stroke:.22px;">active</span>
<div style="left:2083px;top:700px;width:48px;height:45px;background:#fdac41;border-radius:6px"></div>
<svg style="left:2092.3px;top:711px;fill:#fff;stroke:#fff;stroke-width:0.45;" width="28.6" height="28.6" viewBox="0 0 24 24"><path d="M4 21a1 1 0 0 0 .24 0l4-1a1 1 0 0 0 .47-.26L21 7.41a2 2 0 0 0 0-2.82L19.42 3a2 2 0 0 0-2.83 0L4.3 15.29a1.06 1.06 0 0 0-.27.47l-1 4A1 1 0 0 0 3.76 21 1 1 0 0 0 4 21zM18 4.41 19.59 6 18 7.59 16.42 6zM5.91 16.51 15 7.41 16.59 9l-9.1 9.1-2.11.52z"/></svg>
<div style="left:2136px;top:700px;width:48px;height:45px;background:#ff5b5c;border-radius:6px"></div>
<svg style="left:2146.1px;top:708.9px;fill:#fff;stroke:#fff;stroke-width:0.45;" width="27.4" height="27.4" viewBox="0 0 24 24"><path d="M5 20a2 2 0 0 0 2 2h10a2 2 0 0 0 2-2V8h2V6h-4V4a2 2 0 0 0-2-2H9a2 2 0 0 0-2 2v2H3v2h2zM9 4h6v2H9zM8 8h9v12H7V8z"/><path d="M9 10h2v8H9zm4 0h2v8h-2z"/></svg>
<div style="left:478px;top:761px;width:1995px;height:75px;background:#fafafa"></div>
<span class="t" style="left:491.4px;top:790px;font-size:19.5px;color:#0a0a0a;-webkit-text-stroke:.22px;">5</span>
<svg style="left:773px;top:793px" width="60" height="13.7" viewBox="0 0 60 13.7" preserveAspectRatio="none"><defs><linearGradient id="g5" x1="0" x2="1"><stop offset="0" stop-color="#1f7ff0"/><stop offset=".6" stop-color="#2593f6"/><stop offset="1" stop-color="#22b0fa"/></linearGradient></defs><filter id="bl4" x="-20%" y="-20%" width="140%" height="140%"><feGaussianBlur stdDeviation=".55"/></filter><g filter="url(#bl4)"><rect x="-6" y="-6" width="72" height="25.7" fill="#555"/><rect width="60" height="13.7" fill="url(#g5)"/><path d="M18 5.5h24v2.2H18zM24 9h12v1H24zM27 3h7v.9h-7z" fill="#dcecff" opacity=".9"/><path d="M45.5 3.2a1.1 1.1 0 1 1 .01 0zM44 13.7l.4-6.5h2.8l.5 6.5z" fill="#f2f2f2"/><path d="M44.5 11h2.8l.2 2.7h-3.2z" fill="#1c1c2c"/></g></svg>
<span class="t" style="left:1160.7px;top:790px;font-size:19.5px;color:#0a0a0a;letter-spacing:0.64px;-webkit-text-stroke:.22px;">home</span>
<div style="left:1213.6px;top:804.3px;width:11.4px;height:1.6px;background:#0a0a0a"></div>
<span class="t" style="left:1227.1px;top:790px;font-size:19.5px;color:#0a0a0a;letter-spacing:0.54px;-webkit-text-stroke:.22px;">page</span>
<span class="t" style="left:1669.2px;top:790px;font-size:19.5px;color:#0a0a0a;letter-spacing:1.01px;-webkit-text-stroke:.22px;">active</span>
<div style="left:2083px;top:776px;width:48px;height:45px;background:#fdac41;border-radius:6px"></div>
<svg style="left:2092.3px;top:787px;fill:#fff;stroke:#fff;stroke-width:0.45;" width="28.6" height="28.6" viewBox="0 0 24 24"><path d="M4 21a1 1 0 0 0 .24 0l4-1a1 1 0 0 0 .47-.26L21 7.41a2 2 0 0 0 0-2.82L19.42 3a2 2 0 0 0-2.83 0L4.3 15.29a1.06 1.06 0 0 0-.27.47l-1 4A1 1 0 0 0 3.76 21 1 1 0 0 0 4 21zM18 4.41 19.59 6 18 7.59 16.42 6zM5.91 16.51 15 7.41 16.59 9l-9.1 9.1-2.11.52z"/></svg>
<div style="left:2136px;top:776px;width:48px;height:45px;background:#ff5b5c;border-radius:6px"></div>
<svg style="left:2146.1px;top:784.9px;fill:#fff;stroke:#fff;stroke-width:0.45;" width="27.4" height="27.4" viewBox="0 0 24 24"><path d="M5 20a2 2 0 0 0 2 2h10a2 2 0 0 0 2-2V8h2V6h-4V4a2 2 0 0 0-2-2H9a2 2 0 0 0-2 2v2H3v2h2zM9 4h6v2H9zM8 8h9v12H7V8z"/><path d="M9 10h2v8H9zm4 0h2v8h-2z"/></svg>
<span class="t" style="left:478px;top:861px;font-size:22.5px;color:#828d99;letter-spacing:0.28px;">Showing 1 to 5 of 5 entries</span>
<div style="left:2217px;top:890px;width:117px;height:48.5px;background:#f2f4f4;border:1px solid #dfe3e7;border-radius:6px;box-sizing:border-box"></div>
<span class="t" style="left:2231px;top:904px;font-size:22.5px;color:#7e8c9e;letter-spacing:0.41px;-webkit-text-stroke:.7px #7e8c9e;">Previous</span>
<div style="left:2343px;top:890.5px;width:47px;height:49.5px;background:#5a8dee;border-radius:6px"></div>
<span class="t" style="left:2360.2px;top:905px;font-size:22.5px;color:#fff;font-weight:700;">1</span>
<div style="left:2399px;top:890px;width:74px;height:48.5px;background:#f2f4f4;border:1px solid #dfe3e7;border-radius:6px;box-sizing:border-box"></div>
<span class="t" style="left:2412.1px;top:904px;font-size:22.5px;color:#7e8c9e;letter-spacing:0.64px;-webkit-text-stroke:.7px #7e8c9e;">Next</span>
</div>
<!-- language dropdown -->
<div id="langmenu">
<div style="left:1853.5px;top:163px;width:227.5px;height:265px;background:#fff;border:1px solid #dfe3e7;border-radius:6px;box-sizing:border-box;box-shadow:-10px 12px 24px 0 rgba(55,70,95,.2)"></div>
<svg style="left:1890px;top:194px;" width="24" height="18" viewBox="0 0 24 18"><rect y="0" width="24" height="1.43" fill="#b4434c"/><rect y="1.38" width="24" height="1.43" fill="#fff"/><rect y="2.77" width="24" height="1.43" fill="#b4434c"/><rect y="4.15" width="24" height="1.43" fill="#fff"/><rect y="5.54" width="24" height="1.43" fill="#b4434c"/><rect y="6.92" width="24" height="1.43" fill="#fff"/><rect y="8.31" width="24" height="1.43" fill="#b4434c"/><rect y="9.69" width="24" height="1.43" fill="#fff"/><rect y="11.08" width="24" height="1.43" fill="#b4434c"/><rect y="12.46" width="24" height="1.43" fill="#fff"/><rect y="13.85" width="24" height="1.43" fill="#b4434c"/><rect y="15.23" width="24" height="1.43" fill="#fff"/><rect y="16.62" width="24" height="1.43" fill="#b4434c"/><rect width="13.9" height="9.69" fill="#1f2c60"/><g fill="#8e9bc8"><circle cx="1.2" cy="1.25" r="0.54"/><circle cx="3.5" cy="1.25" r="0.54"/><circle cx="5.81" cy="1.25" r="0.54"/><circle cx="8.11" cy="1.25" r="0.54"/><circle cx="10.42" cy="1.25" r="0.54"/><circle cx="12.72" cy="1.25" r="0.54"/><circle cx="2.35" cy="3.05" r="0.54"/><circle cx="4.66" cy="3.05" r="0.54"/><circle cx="6.96" cy="3.05" r="0.54"/><circle cx="9.26" cy="3.05" r="0.54"/><circle cx="11.57" cy="3.05" r="0.54"/><circle cx="1.2" cy="4.85" r="0.54"/><circle cx="3.5" cy="4.85" r="0.54"/><circle cx="5.81" cy="4.85" r="0.54"/><circle cx="8.11" cy="4.85" r="0.54"/><circle cx="10.42" cy="4.85" r="0.54"/><circle cx="12.72" cy="4.85" r="0.54"/><circle cx="2.35" cy="6.65" r="0.54"/><circle cx="4.66" cy="6.65" r="0.54"/><circle cx="6.96" cy="6.65" r="0.54"/><circle cx="9.26" cy="6.65" r="0.54"/><circle cx="11.57" cy="6.65" r="0.54"/><circle cx="1.2" cy="8.45" r="0.54"/><circle cx="3.5" cy="8.45" r="0.54"/><circle cx="5.81" cy="8.45" r="0.54"/><circle cx="8.11" cy="8.45" r="0.54"/><circle cx="10.42" cy="8.45" r="0.54"/><circle cx="12.72" cy="8.45" r="0.54"/></g></svg>
<span class="t" style="left:1926.5px;top:194px;font-size:18px;color:#475f7b;letter-spacing:-0.3px;transform:scaleX(0.958);-webkit-text-stroke:.22px;">ENGLISH</span>
<svg style="left:1890px;top:256px;" width="24" height="18" viewBox="0 0 24 18"><rect width="8" height="18" fill="#002e8a"/><rect x="8" width="8" height="18" fill="#fff"/><rect x="16" width="8" height="18" fill="#ee2436"/></svg>
<span class="t" style="left:1926.5px;top:255px;font-size:18px;color:#475f7b;letter-spacing:-0.3px;transform:scaleX(0.947);-webkit-text-stroke:.22px;">FRENCH</span>
<svg style="left:1890px;top:317px;" width="24" height="18" viewBox="0 0 24 18"><rect width="24" height="6" fill="#000"/><rect y="6" width="24" height="6" fill="#dd0000"/><rect y="12" width="24" height="6" fill="#ffce00"/></svg>
<span class="t" style="left:1926.5px;top:316px;font-size:18px;color:#475f7b;letter-spacing:-0.3px;transform:scaleX(0.939);-webkit-text-stroke:.22px;">GERMAN</span>
<svg style="left:1890px;top:378px;" width="24" height="18" viewBox="0 0 24 18"><rect width="24" height="18" fill="#ff0000"/><rect width="9.6" height="18" fill="#006600"/><circle cx="9.6" cy="9" r="3.3" fill="#f4d35e"/><circle cx="9.6" cy="9" r="1.8" fill="#fff" stroke="#d33" stroke-width=".8"/></svg>
<span class="t" style="left:1926.5px;top:377px;font-size:18px;color:#475f7b;letter-spacing:-0.3px;transform:scaleX(0.947);-webkit-text-stroke:.22px;">PORTUGUESE</span>
</div>
<!-- footer -->
<div id="footer">
<span class="t" style="left:440.3px;top:1433px;font-size:22.5px;color:#737f8e;letter-spacing:0.23px;">2020 © PIXINVENT</span>
<span class="t" style="left:1779.5px;top:1433px;font-size:22.5px;color:#737f8e;letter-spacing:0.45px;">Crafted with</span>
<svg style="left:1915.9px;top:1432.5px;fill:#ff5b5c;" width="22" height="22" viewBox="0 0 24 24"><path d="M20.205 4.791a5.938 5.938 0 0 0-4.209-1.754A5.906 5.906 0 0 0 12 4.595a5.904 5.904 0 0 0-3.996-1.558 5.942 5.942 0 0 0-4.213 1.758c-2.353 2.363-2.352 6.059.002 8.412L12 21.414l8.207-8.207c2.354-2.353 2.355-6.049-.002-8.416z"/></svg>
<span class="t" style="left:1949px;top:1433px;font-size:22.5px;color:#737f8e;letter-spacing:-0.3px;transform:scaleX(0.98);">by</span>
<svg style="left:1981px;top:1428.7px;fill:#838d9a;overflow:visible" width="114" height="31" viewBox="0 -22.3 114 31"><text x="0" y="0" font-size="22.3" font-family="'Liberation Serif','Noto Serif CJK SC',serif" fill="#838d9a">优选源码网</text></svg>
<span class="t" style="left:2100px;top:1433px;font-size:22.5px;color:#737f8e;letter-spacing:-0.3px;transform:scaleX(0.942);">YXYMK.COM</span>
<svg style="left:2234.5px;top:1428.7px;fill:#838d9a;overflow:visible" width="91" height="31" viewBox="0 -22.3 91 31"><text x="0" y="0" font-size="22.3" font-family="'Liberation Serif','Noto Serif CJK SC',serif" fill="#838d9a">免费分享</text></svg>
<svg style="left:2331px;top:1428.7px;fill:#838d9a;overflow:visible" width="180" height="31" viewBox="0 -22.3 180 31"><text x="0" y="0" font-size="22.3" font-family="'Liberation Serif','Noto Serif CJK SC',serif" fill="#838d9a">学习底层代码使用</text></svg>
<div style="left:0px;top:1481px;width:72px;height:1px;background:#1c2a24"></div>
<div style="left:72px;top:1481px;width:516px;height:1px;background:#c4c6c5"></div>
<div style="left:588px;top:1481px;width:1972px;height:1px;background:#141716"></div>
</div>
</div></body></html>
